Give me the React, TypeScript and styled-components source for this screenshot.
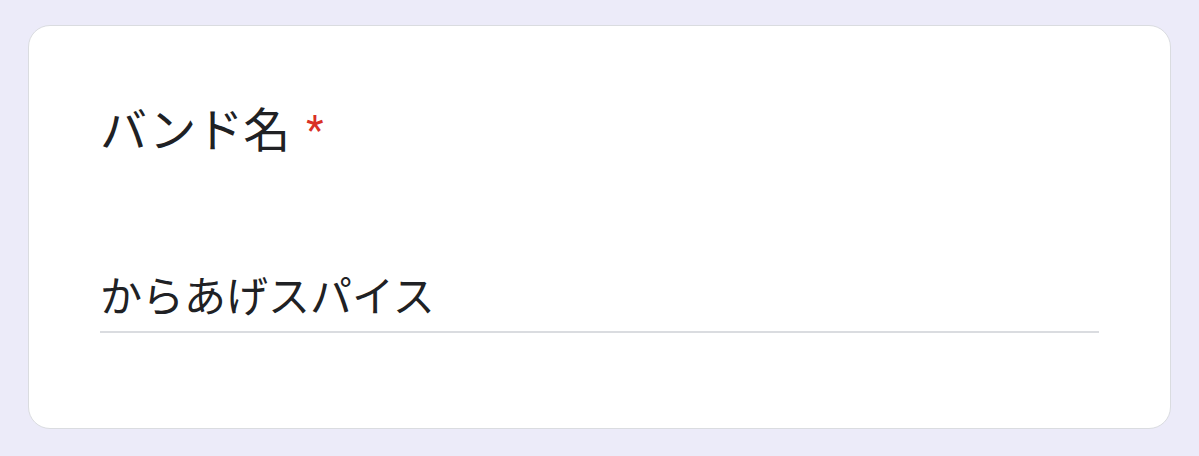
import { createGlobalStyle, styled } from "styled-components";

const GlobalStyle = createGlobalStyle`
  html, body {
    margin: 0;
    padding: 0;
    background: #ecebf9;
  }
  body {
    font-family: Roboto, "Noto Sans CJK JP", sans-serif;
  }
`

const Page = styled.div`
  padding: 25px 28px 27px 28px;
`

const QuestionCard = styled.div`
  box-sizing: border-box;
  width: 1143px;
  height: 404px;
  background: #ffffff;
  border: 1px solid #dadce0;
  border-radius: 22px;
  padding: 70px 71px 0 71px;
  display: flex;
  flex-direction: column;
`

const Title = styled.div`
  font-family: Roboto, "Noto Sans CJK JP", sans-serif;
  font-size: 47px;
  line-height: 69px;
  height: 69px;
  color: #202124;
  white-space: nowrap;
`

// red mark after a required question's title
const Required = styled.span`
  color: #d93025;
  font-family: Roboto, sans-serif;
  font-size: 40px;
  padding-left: 16px;
  position: relative;
  top: -3px;
`

const AnswerField = styled.div`
  margin-top: 98px;
  border-bottom: 2px solid #dadce0;
  padding-bottom: 6px;
`

const AnswerText = styled.div`
  font-family: "Noto Sans CJK JP", sans-serif;
  font-size: 42px;
  line-height: 62px;
  height: 62px;
  color: #202124;
  white-space: nowrap;
`

const App = () => {
    return(
        <Page>
            <GlobalStyle />
            <QuestionCard>
                <Title>
                    バンド名<Required aria-label="必須の質問">*</Required>
                </Title>
                <AnswerField>
                    <AnswerText>からあげスパイス</AnswerText>
                </AnswerField>
            </QuestionCard>
        </Page>
    )
}

export default App
